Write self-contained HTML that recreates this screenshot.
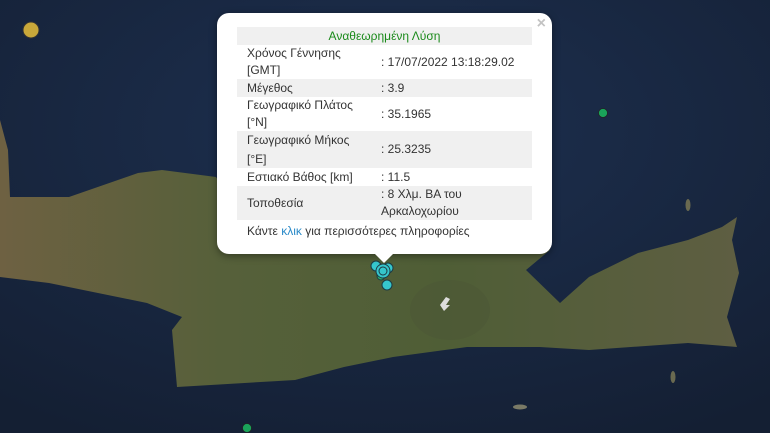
<!DOCTYPE html>
<html><head><meta charset="utf-8"><style>
body{margin:0;width:770px;height:433px;overflow:hidden;position:relative;background:#172539;font-family:"Liberation Sans",sans-serif}
svg{position:absolute;left:0;top:0}
.pop{position:absolute;left:217px;top:13px;width:335px;height:241px;background:#fff;border-radius:12px;box-shadow:0 2px 8px rgba(0,0,0,.4)}
.x{position:absolute;right:6px;top:2px;color:#c3c3c3;font:bold 16px "Liberation Sans",sans-serif}
table{position:absolute;left:20px;top:14px;width:295px;border-collapse:collapse;font-size:12px;color:#333;table-layout:fixed}
td{padding:0 10px;line-height:17px}
tr.g{background:#f0f0f0}
td.v{padding-left:8px}
.ft{position:absolute;left:30px;top:211px;font-size:12px;color:#333}
.tip{position:absolute;left:374px;top:253px;width:0;height:0;border-left:10px solid transparent;border-right:10px solid transparent;border-top:10px solid #fff}
</style></head><body>
<svg width="770" height="433">
<defs>
<radialGradient id="s" cx="0.5" cy="0.3" r="0.8"><stop offset="0" stop-color="#1d3050"/><stop offset="1" stop-color="#141f33"/></radialGradient>
<linearGradient id="l" x1="0" x2="1"><stop offset="0" stop-color="#6e6142"/><stop offset="0.3" stop-color="#56603a"/><stop offset="0.6" stop-color="#4f5e36"/><stop offset="1" stop-color="#5e5e42"/></linearGradient>
</defs>
<rect width="770" height="433" fill="url(#s)"/>
<path d="M0,120 L8,150 L10,197 L69,197 L138,173 L162,170 L216,177 L230,200 L520,200 L550,250 L526,270 L560,303 L589,277 L638,253 L688,240 L722,227 L737,217 L732,240 L739,273 L727,317 L737,347 L688,343 L589,350 L540,347 L467,347 L393,357 L344,367 L295,380 L177,387 L172,330 L182,317 L147,303 L49,283 L0,277 Z" fill="url(#l)"/>
<ellipse cx="450" cy="310" rx="40" ry="30" fill="#4a5236" opacity=".35"/>
<path d="M440,305 l6,-8 l4,2 l-4,6 l4,0 l-6,6 z" fill="#ddd"/>
<ellipse cx="688" cy="205" rx="2.5" ry="6" fill="#6a6a50"/>
<ellipse cx="673" cy="377" rx="2.5" ry="6" fill="#6a6a50"/>
<ellipse cx="520" cy="407" rx="7" ry="2.5" fill="#7a7a66"/>
<circle cx="31" cy="30" r="8" fill="#c9a83a" stroke="#333" stroke-width="1"/>
<circle cx="603" cy="113" r="4.5" fill="#1aa35a" stroke="#222" stroke-width=".7"/>
<circle cx="247" cy="428" r="4.5" fill="#1aa35a" stroke="#222" stroke-width=".7"/>
<g stroke="#1c3b44" stroke-width="1" fill="#36c6cc">
<circle cx="376" cy="266" r="5"/><circle cx="388" cy="268" r="5"/>
<circle cx="381" cy="276" r="4" fill="#2bb070"/>
<circle cx="387" cy="285" r="5"/>
<circle cx="383" cy="271" r="7"/><circle cx="383" cy="271" r="4"/>
</g>
</svg>
<div class="pop"><div class="x">×</div>
<table>
<colgroup><col style="width:136px"><col></colgroup>
<tr class="g"><td colspan="2" style="text-align:center;color:#1a8a1a;line-height:18px">Αναθεωρημένη Λύση</td></tr>
<tr><td>Χρόνος Γέννησης<br>[GMT]</td><td class="v" style="white-space:nowrap">: 17/07/2022 13:18:29.02</td></tr>
<tr class="g"><td style="line-height:18px">Μέγεθος</td><td class="v">: 3.9</td></tr>
<tr><td>Γεωγραφικό Πλάτος<br>[°N]</td><td class="v">: 35.1965</td></tr>
<tr class="g"><td style="line-height:18.5px">Γεωγραφικό Μήκος<br>[°E]</td><td class="v">: 25.3235</td></tr>
<tr><td style="line-height:18px">Εστιακό Βάθος [km]</td><td class="v">: 11.5</td></tr>
<tr class="g"><td>Τοποθεσία</td><td class="v">: 8 Χλμ. ΒΑ του<br>Αρκαλοχωρίου</td></tr>
</table>
<div class="ft">Κάντε <span style="color:#2a8ac8">κλικ</span> για περισσότερες πληροφορίες</div>
</div>
<div class="tip"></div>
</body></html>
